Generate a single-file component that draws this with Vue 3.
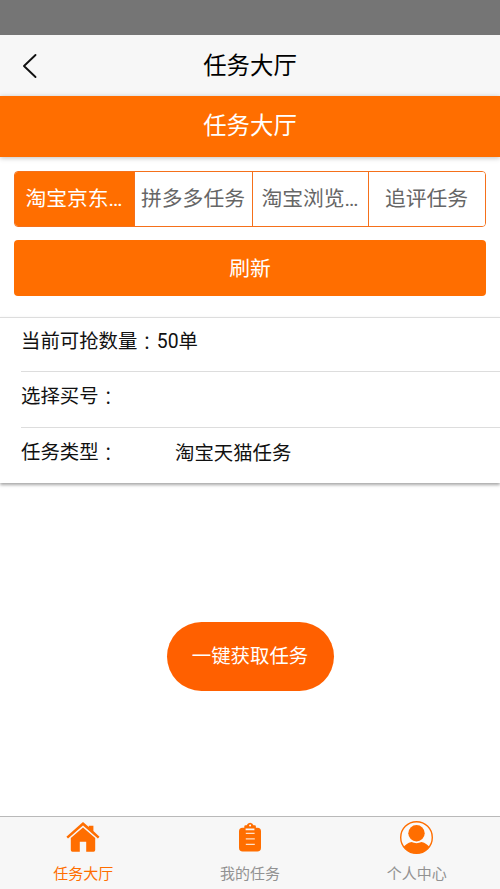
<script setup>
import { ref } from 'vue'

const tabs = ['淘宝京东…', '拼多多任务', '淘宝浏览…', '追评任务']
const activeTab = ref(0)
const rows = [
  { label: '当前可抢数量', value: '50单', inline: true },
  { label: '选择买号', value: '' },
  { label: '任务类型', value: '淘宝天猫任务' },
]
</script>

<template>
  <div class="page">
    <div class="status"></div>
    <header class="nav">
      <svg class="back" viewBox="0 0 16 26" fill="none" stroke="#111" stroke-width="1.9" stroke-linecap="round" stroke-linejoin="round">
        <path d="M13.5 2 2 13 13.5 24" />
      </svg>
      <h1>任务大厅</h1>
    </header>
    <div class="banner">任务大厅</div>

    <div class="tabs">
      <button v-for="(t, i) in tabs" :key="t" :class="{ active: i === activeTab }" @click="activeTab = i">{{ t }}</button>
    </div>
    <button class="refresh">刷新</button>

    <ul class="list">
      <li v-for="r in rows" :key="r.label">
        <div class="label">{{ r.label }}<span class="colon">：</span><template v-if="r.inline">{{ r.value }}</template></div>
        <div v-if="!r.inline" class="value">{{ r.value }}</div>
      </li>
    </ul>

    <main>
      <button class="grab">一键获取任务</button>
    </main>

    <footer>
      <a class="on">
        <svg width="34" height="32" viewBox="0 0 34 32" fill="#ff6e00">
          <path d="M.4 15.7 17 .9l5.8 5V4.7h4.6v5.3l6.1 5.7-1.6 1.9L17 4.5 2 17.6z" />
          <path d="M4.8 16.9 17 6.4l12.2 10.5v12.2q0 1.6-1.6 1.6h-7.4v-9.9h-6.4v9.9H6.4q-1.6 0-1.6-1.6z" />
        </svg>
        <span>任务大厅</span>
      </a>
      <a>
        <svg width="34" height="32" viewBox="0 0 34 32">
          <path fill="#ff6e00" d="M9.5 6.7h3.1v2.5h8.8V6.7h3.1q3.5 0 3.5 3.5v16.5q0 3.8-3.7 3.8H9.7Q6 30.5 6 26.7V10.2q0-3.500 3.500-3.500z" />
          <path fill="#ff6e00" d="M11.3 7.4V5.5q0-1.2 1.2-1.2h1.2Q14.7 1.7 17.1 1.7T20.5 4.3h1.2q1.2 0 1.2 1.2v1.900z" />
          <circle cx="17.1" cy="4.6" r="1" fill="#fff" />
          <path d="M12.8 12.3h8.8M12.8 17.8h9M12.8 23.3h9" stroke="#ffe0c8" stroke-width="1.3" />
        </svg>
        <span>我的任务</span>
      </a>
      <a>
        <svg class="user" width="34" height="34" viewBox="0 0 34 34">
          <defs><clipPath id="disc"><circle cx="16.5" cy="16.5" r="16" /></clipPath></defs>
          <circle cx="16.5" cy="16.5" r="15.8" fill="#fafafa" stroke="#ff6e00" stroke-width="1.4" />
          <circle cx="16.5" cy="12.3" r="8.2" fill="#ff6e00" />
          <path clip-path="url(#disc)" fill="#ff6e00" d="M2.5 27.5Q6 22.1 11.500 21q5 2.300 10 0Q27 22.100 30.500 27.500v6h-28z" />
        </svg>
        <span>个人中心</span>
      </a>
    </footer>
  </div>
</template>

<style>
body { background: #fff; }
</style>

<style scoped>
* { box-sizing: border-box; }
.page {
  height: 889px;
  display: flex;
  flex-direction: column;
  font-family: Roboto, "Noto Sans CJK SC", sans-serif;
  color: #111;
  background: #fff;
  overflow: hidden;
}
button {
  font: inherit;
  margin: 0;
  padding: 0;
  border: 0;
  cursor: pointer;
}
.status { height: 35px; flex: none; background: #757575; }
.nav {
  height: 61px;
  flex: none;
  display: grid;
  grid-template-columns: 60px 1fr 60px;
  align-items: center;
  background: #f7f7f7;
}
.back { width: 16px; height: 26px; margin-left: 22px; margin-top: 1px; }
h1 {
  margin: 0;
  font-size: 23.4px;
  font-weight: 400;
  line-height: 30px;
  text-align: center;
  color: #000;
}
.banner {
  height: 61px;
  flex: none;
  line-height: 60px;
  text-align: center;
  font-size: 23.4px;
  color: #fff;
  background: #ff6e00;
  box-shadow: 0 1px 5px rgba(0, 0, 0, .25);
}
.tabs {
  height: 56px;
  flex: none;
  margin: 13.6px 14px 0;
  display: grid;
  grid-template-columns: 119px 118px 116px 1fr;
  border: 1px solid #f5701a;
  border-radius: 4px;
  overflow: hidden;
}
.tabs button {
  font-size: 20.8px;
  padding: 0 1px 3px 0;
  color: #666;
  background: #fff;
  border-left: 1px solid #f5701a;
  white-space: nowrap;
}
.tabs button:first-child { border-left: 0; }
.tabs button.active { color: #fff; background: #ff6e00; }
.refresh {
  height: 56px;
  flex: none;
  margin: 13.4px 14px 0;
  padding-bottom: 1px;
  border-radius: 4px;
  font-size: 20.8px;
  color: #fff;
  background: #ff6e00;
}
.list {
  list-style: none;
  margin: 21px 0 0;
  padding: 0 0 0 21px;
  height: 166px;
  flex: none;
  border-top: 1px solid #ddd;
  box-shadow: 0 2px 3px rgba(0, 0, 0, .35);
  font-size: 19.4px;
}
.list li {
  display: flex;
  height: 56px;
  line-height: 28px;
  padding-top: 11px;
  border-top: 1px solid #ddd;
}
.list li:first-child { height: 53px; padding-top: 10px; border-top: 0; }
.label { min-width: 154px; white-space: nowrap; }
.colon { font-family: "Noto Sans CJK TC", sans-serif; font-weight: 300; line-height: 1; vertical-align: -2px; }
.value { padding-top: 1px; }
main {
  flex: 1;
  display: flex;
  justify-content: center;
  align-items: flex-start;
  padding-top: 139px;
}
.grab {
  width: 167px;
  height: 69px;
  padding-bottom: 3px;
  border-radius: 35px;
  font-size: 19.4px;
  color: #fff;
  background: #ff6000;
}
footer {
  height: 73px;
  flex: none;
  display: grid;
  grid-template-columns: repeat(3, 1fr);
  border-top: 1px solid #b9b9b9;
  background: #f7f7f7;
}
footer a {
  display: flex;
  flex-direction: column;
  align-items: center;
  padding-top: 4px;
  font-size: 15px;
  line-height: 20px;
  color: #929292;
}
footer a.on { color: #ff6e00; }
footer svg { flex: none; }
footer span { margin-top: 11px; }
footer .user { margin-bottom: -2px; }
</style>
